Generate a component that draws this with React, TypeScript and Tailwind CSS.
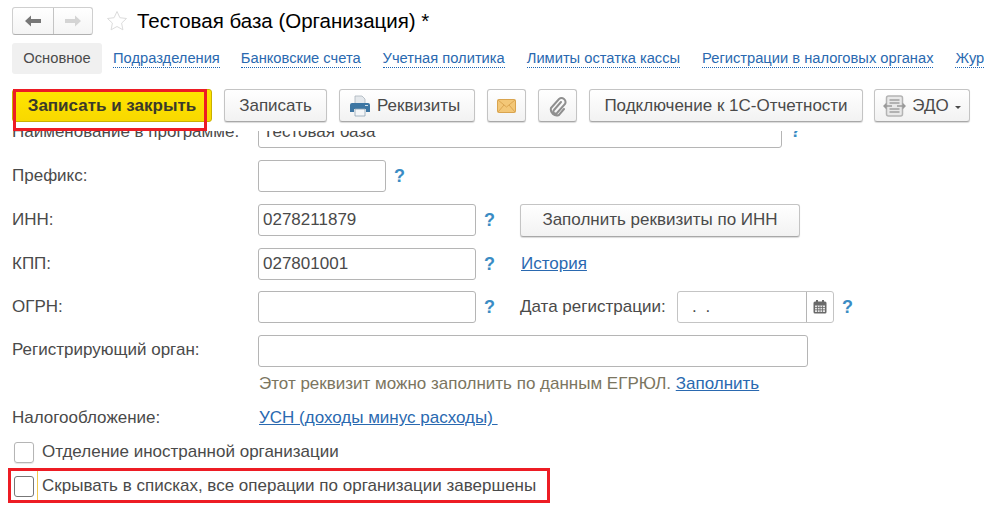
import type { ReactNode } from "react";

const tabs = [
  { label: "Подразделения", gap: "ml-[11px]" },
  { label: "Банковские счета", gap: "ml-[21px]" },
  { label: "Учетная политика", gap: "ml-[22px]" },
  { label: "Лимиты остатка кассы", gap: "ml-[22px]" },
  { label: "Регистрации в налоговых органах", gap: "ml-[22px]" },
  { label: "Жур", gap: "ml-[22px]" },
];

const btn =
  "flex h-[33px] items-center justify-center rounded-[3px] border border-[#c4c4c4] border-b-[#a8a8a8] bg-gradient-to-b from-white to-[#f2f2f2] text-[17px] text-[#4a4a4a] shadow-[0_1px_1px_rgba(0,0,0,0.15)]";
const field = "h-8 rounded-[3px] border border-[#b5b5b5] bg-white px-1 text-[17px] leading-[30px] text-[#4a4a4a]";

function Help({ className = "" }: { className?: string }) {
  return <span className={`text-[18px] font-bold leading-none text-[#3a8cc4] ${className}`}>?</span>;
}

function Row({ label, className = "", labelClass = "", children }: { label: string; className?: string; labelClass?: string; children: ReactNode }) {
  return (
    <div className={`flex h-8 items-center whitespace-nowrap ${className}`}>
      <div className={`w-[246px] shrink-0 text-[17px] text-[#4a4a4a] ${labelClass}`}>{label}</div>
      {children}
    </div>
  );
}

function PrinterIcon() {
  return (
    <svg width="22" height="22" viewBox="0 0 22 22">
      <path d="M6 1h7l3 3v5H6z" fill="#e4e8ec" stroke="#a9b4bd" strokeWidth="0.8" />
      <path d="M1 10a2 2 0 0 1 2-2h16a2 2 0 0 1 2 2v7h-4v-3H5v3H1z" fill="#3d76a3" />
      <path d="M6 14h10v7H6z" fill="#f4f6f8" stroke="#8fa3b3" strokeWidth="0.8" />
      <path d="M16 10h3v1h-3z" fill="#cfe0ec" />
    </svg>
  );
}

function MailIcon() {
  return (
    <svg width="19" height="14" viewBox="0 0 19 14">
      <rect x="0.5" y="0.5" width="18" height="13" rx="1" fill="#f3c777" stroke="#d9a44f" />
      <path d="M1 1l8.5 7L18 1M1 13l6-7M18 13l-6-7" fill="none" stroke="#dca651" strokeWidth="1" />
    </svg>
  );
}

function ClipIcon() {
  return (
    <svg width="20" height="22" viewBox="0 0 20 22" fill="none" stroke="#8f8f8f" strokeWidth="2" strokeLinecap="round">
      <path d="M13 7l-7 8a2 2 0 0 0 3 3l8-9a4 4 0 0 0-6-5l-8 9a6 6 0 0 0 8 7l5-6" />
    </svg>
  );
}

function EdoIcon() {
  return (
    <svg width="23" height="22" viewBox="0 0 23 22">
      <rect x="3.500" y="1" width="16" height="20" rx="2" fill="#e8e8e8" stroke="#b4b4b4" strokeWidth="1.500" />
      <path d="M6.500 5h10M6.500 8h10M6.500 14h10M6.500 17h10" stroke="#a0a0a0" strokeWidth="1.300" />
      <path d="M1 11h8M14 11h8" stroke="#9a9a9a" strokeWidth="1.300" />
      <path d="M0 11l3.500-3.500v7zM23 11l-3.500-3.500v7z" fill="#9a9a9a" />
    </svg>
  );
}

function CalendarIcon() {
  return (
    <svg width="14" height="14" viewBox="0 0 14 14">
      <rect x="0.5" y="1.5" width="13" height="12" rx="1.5" fill="#6a6a6a" />
      <rect x="3" y="0" width="2" height="3" fill="#6a6a6a" />
      <rect x="9" y="0" width="2" height="3" fill="#6a6a6a" />
      <path d="M2 5.5h10v6.500H2z" fill="#e4e4e4" />
      <path d="M2 7.500h10M2 9.800h10M4.500 5.500v6.500M7 5.500v6.500M9.500 5.500v6.500" stroke="#6a6a6a" strokeWidth="0.8" />
    </svg>
  );
}

export default function App() {
  return (
    <div className="relative h-[506px] w-[984px] overflow-hidden bg-white pl-3 pt-[7px] font-['Liberation_Sans',Arial,sans-serif]">
      <header className="flex h-7 items-center">
        <div className="flex h-7 w-[81px] rounded-[3px] border border-[#cfcfcf] border-b-[#b0b0b0] bg-gradient-to-b from-white to-[#f4f4f4]">
          <div className="flex w-[41px] items-center justify-center border-r border-[#c4c4c4]">
            <svg width="16" height="12" viewBox="0 0 16 12">
              <path d="M0 6l6-5.500V4h10v4H6v3.500z" fill="#777777" />
            </svg>
          </div>
          <div className="flex flex-1 items-center justify-center">
            <svg width="16" height="12" viewBox="0 0 16 12">
              <path d="M16 6l-6-5.500V4H0v4h10v3.500z" fill="#d4d4d4" />
            </svg>
          </div>
        </div>
        <svg className="ml-[13px]" width="22" height="22" viewBox="0 0 22 22">
          <path
            d="M11 1.500l2.900 6.200 6.600.8-4.900 4.600 1.300 6.700L11 16.500l-5.900 3.300 1.300-6.700L1.500 8.500l6.600-.8z"
            fill="#fff"
            stroke="#dcdcdc"
          />
        </svg>
        <h1 className="ml-[9px] text-[20.5px] font-normal text-black">Тестовая база (Организация) *</h1>
      </header>

      <nav className="mt-2 flex h-[31px] items-center whitespace-nowrap text-[14.7px]">
        <div className="flex h-[31px] w-[90px] shrink-0 items-center justify-center rounded-[3px] bg-[#f0f0f0] text-[#4a4a4a]">Основное</div>
        {tabs.map((t) => (
          <span key={t.label} className={`shrink-0 border-b border-dotted border-[#1f66b5] leading-[17px] text-[#2a69b0] ${t.gap}`}>
            {t.label}
          </span>
        ))}
      </nav>

      <div className="mt-[15px] flex items-center whitespace-nowrap">
        <button className="flex h-[33px] w-[200px] items-center justify-center rounded-[3px] border border-[#c9b000] bg-gradient-to-b from-[#ffe600] to-[#f8d800] text-[17px] font-bold text-[#3a3a2a]">
          Записать и закрыть
        </button>
        <button className={`${btn} ml-3 w-[103px]`}>Записать</button>
        <button className={`${btn} ml-3 w-[136px] !justify-start gap-[6px] pl-[9px]`}>
          <PrinterIcon />
          Реквизиты
        </button>
        <button className={`${btn} ml-3 w-[39px]`}>
          <MailIcon />
        </button>
        <button className={`${btn} ml-3 w-[39px]`}>
          <ClipIcon />
        </button>
        <button className={`${btn} ml-3 w-[274px]`}>Подключение к 1С-Отчетности</button>
        <button className={`${btn} ml-[11px] w-[96px] gap-[6px]`}>
          <EdoIcon />
          ЭДО
          <span className="mt-[3px] border-x-[3px] border-t-[3px] border-x-transparent border-t-[#4a4a4a]" />
        </button>
      </div>

      <main className="mt-[9px] h-[375px] overflow-hidden">
        <div className="-mt-[15px]">
          <Row label="Наименование в программе:">
            <div className={`${field} w-[524px]`}>Тестовая база</div>
            <Help className="ml-2 -mt-[3px]" />
          </Row>
          <Row label="Префикс:" className="mt-3">
            <div className={`${field} w-[128px]`} />
            <Help className="ml-2" />
          </Row>
          <Row label="ИНН:" className="mt-3">
            <div className={`${field} w-[218px]`}>0278211879</div>
            <Help className="ml-2" />
            <button className={`${btn} ml-[25px] w-[280px]`}>Заполнить реквизиты по ИНН</button>
          </Row>
          <Row label="КПП:" className="mt-3">
            <div className={`${field} w-[218px]`}>027801001</div>
            <Help className="ml-2" />
            <span className="ml-[26px] text-[17px] text-[#2a69b0] underline">История</span>
          </Row>
          <Row label="ОГРН:" className="mt-[11px]">
            <div className={`${field} w-[218px]`} />
            <Help className="ml-2" />
            <span className="ml-[25px] w-[157px] text-[17px] text-[#4a4a4a]">Дата регистрации:</span>
            <div className="flex h-8 w-[157px] rounded-[3px] border border-[#c4c4c4]">
              <div className="flex-1 pl-[14px] text-[17px] leading-[30px] tracking-[2px] text-[#4a4a4a]">. .</div>
              <div className="flex w-[27px] items-center justify-center border-l border-[#b5b5b5]">
                <CalendarIcon />
              </div>
            </div>
            <Help className="ml-2" />
          </Row>
          <Row label="Регистрирующий орган:" className="mt-3" labelClass="-mt-[3px]">
            <div className={`${field} w-[550px]`} />
          </Row>
          <div className="mt-[8px] whitespace-nowrap pl-[247px] text-[17px] leading-[18px] text-[#7b7560]">
            Этот реквизит можно заполнить по данным ЕГРЮЛ. <span className="text-[#2a69b0] underline">Заполнить</span>
          </div>
          <div className="mt-[15px] flex h-5 items-center whitespace-pre text-[17px]">
            <div className="w-[247px] shrink-0 text-[#4a4a4a]">Налогообложение:</div>
            <span className="text-[#2a69b0] underline">УСН (доходы минус расходы) </span>
          </div>
          <div className="mt-[13px] flex h-[22px] items-center text-[17px] text-[#4a4a4a]">
            <span className="ml-[2px] h-[21px] w-[20px] rounded-[3px] border border-[#b5b5b5] shadow-[0_1px_1px_rgba(0,0,0,0.1)]" />
            <span className="ml-2">Отделение иностранной организации</span>
          </div>
          <div className="mt-[12px] flex h-[22px] items-center text-[17px] text-[#4a4a4a]">
            <span className="ml-[2px] h-[21px] w-[20px] rounded-[3px] border border-[#777777]" />
            <span className="ml-2">Скрывать в списках, все операции по организации завершены</span>
          </div>
        </div>
      </main>

      <div className="absolute left-[13px] top-[89px] h-[42px] w-[194px] border-[3px] border-[#ed1c24]" />
      <div className="absolute left-[8px] top-[468px] h-[35px] w-[542px] border-[3px] border-[#ed1c24]" />
      <div className="absolute left-[37px] top-[471px] h-[29px] w-px bg-[#f2c94c]" />
    </div>
  );
}
